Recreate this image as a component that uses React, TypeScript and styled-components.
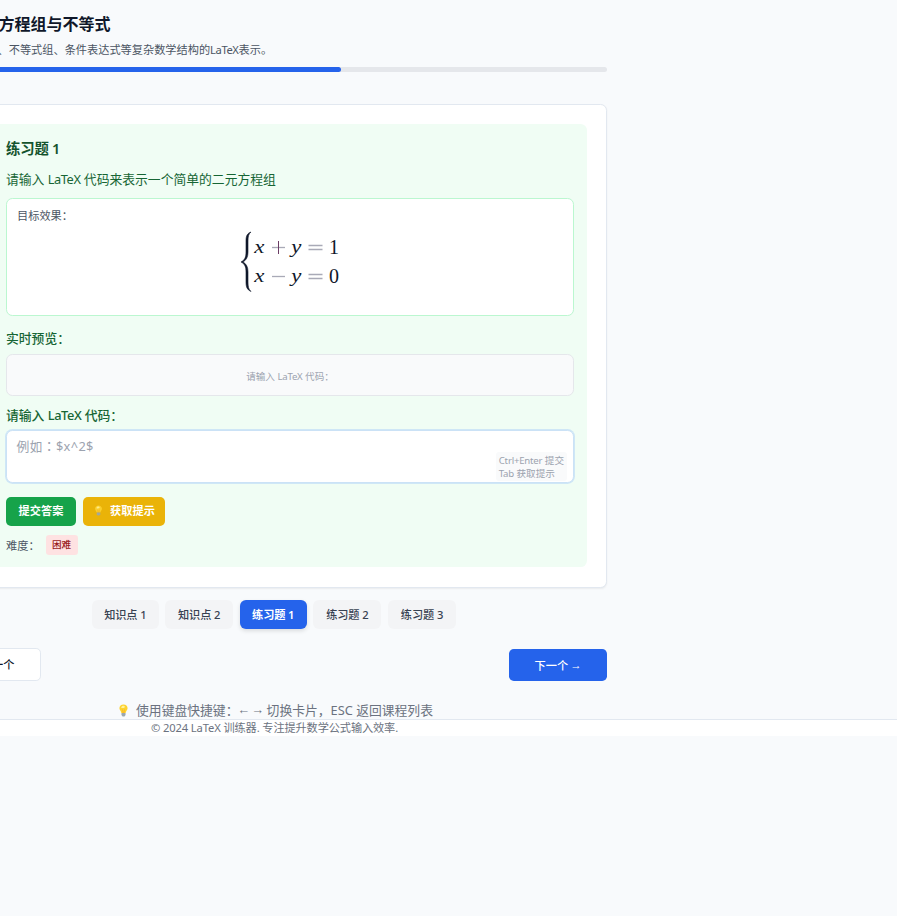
import React from "react";
import styled, { createGlobalStyle, css } from "styled-components";

const GlobalStyle = createGlobalStyle`
  * { box-sizing: border-box; }
  body {
    margin: 0;
    overflow: hidden;
    background: #f8fafc;
    color: #0f172a;
    font-family: "Noto Sans", "Noto Sans CJK SC", sans-serif;
  }
  h1, h3, p { margin: 0; }
  button, textarea { font-family: inherit; }
`;

const Page = styled.div`
  min-height: 916px;
  overflow: hidden;
  white-space: nowrap;
`;

const Column = styled.main`
  width: 664px;
  height: 719px;
  margin-left: -57px;
  padding-top: 13px;
`;

const Title = styled.h1`
  padding-left: 55.5px;
  font-size: 16px;
  line-height: 22px;
  font-weight: 700;
`;

const Subtitle = styled.p`
  margin-top: 6px;
  padding-left: 54.5px;
  font-size: 11.2px;
  line-height: 18px;
  color: #4b5563;
`;

const Latin = styled.span`
  letter-spacing: -0.4px;
`;

const Progress = styled.div`
  height: 5px;
  margin-top: 8px;
  border-radius: 5px;
  background: #e5e7eb;
  overflow: hidden;
`;

const ProgressFill = styled.div`
  height: 100%;
  border-radius: 5px;
  background: #2563eb;
`;

const Card = styled.section`
  height: 484px;
  margin-top: 32px;
  padding: 19px;
  border: 1px solid #e2e8f0;
  border-radius: 6.4px;
  background: #fff;
  box-shadow: 0 1px 2px rgba(0, 0, 0, 0.06);
`;

const Exercise = styled.div`
  height: 443px;
  padding: 14px 13px 0 43px;
  border-radius: 6.4px;
  background: #f0fdf4;
`;

const ExerciseTitle = styled.h3`
  font-size: 14.4px;
  line-height: 22px;
  font-weight: 600;
  letter-spacing: -0.2px;
  color: #14532d;
`;

const Question = styled.p`
  margin-top: 9px;
  font-size: 12.8px;
  line-height: 20px;
  color: #166534;
`;

const Target = styled.div`
  height: 118px;
  margin-top: 9px;
  padding: 8px 10px;
  border: 1px solid #bbf7d0;
  border-radius: 6.4px;
  background: #fff;
`;

const TargetLabel = styled.div`
  font-size: 11.2px;
  line-height: 18px;
  color: #4b5563;
`;

const Equation = styled.div`
  display: flex;
  justify-content: center;
  margin-top: 6px;
`;

const Brace = styled.svg`
  width: 13px;
  height: 62px;
`;

const Rows = styled.div`
  display: grid;
  grid-template-columns: 14px 23px 14px 23px 13px;
  grid-auto-rows: 29px;
  margin-top: 2px;
  font-family: "Liberation Serif", serif;
  font-size: 20px;
  line-height: 28px;
`;

const Variable = styled.span`
  padding-left: 1px;
  font-size: 19px;
  font-style: italic;
  transform: scaleX(1.2);
  transform-origin: left;
`;

const Operator = styled.span`
  display: flex;
  align-items: center;
  justify-content: center;
  svg { display: block; }
`;

const Digit = styled.span`
  padding-left: 1px;
  text-align: center;
`;

const Label = styled.div<{ $gap: number }>`
  margin-top: ${(p) => p.$gap}px;
  font-size: 12.8px;
  line-height: 20px;
  font-weight: 500;
  color: #166534;
`;

const Preview = styled.div`
  height: 42px;
  margin-top: 6px;
  padding-top: 3px;
  border: 1px solid #e5e7eb;
  border-radius: 6.4px;
  background: #f9fafb;
  font-size: 9.6px;
  line-height: 38px;
  text-align: center;
  color: #9ca3af;
`;

const Field = styled.div`
  position: relative;
  height: 54px;
  margin-top: 5px;
`;

const Input = styled.textarea`
  display: block;
  width: 100%;
  height: 53px;
  padding: 5px 9.5px;
  border: 1px solid #cbe2f6;
  border-radius: 6.4px;
  outline: none;
  resize: none;
  background: #fff;
  box-shadow: 0 0 0 1px #cfe7f6;
  font-family: "Noto Sans", "Noto Sans CJK TC", sans-serif;
  font-size: 12.8px;
  line-height: 20px;
  letter-spacing: 0.35px;
  &::placeholder {
    color: #9ca3af;
  }
`;

const Keys = styled.div`
  position: absolute;
  right: 7px;
  bottom: 3px;
  padding: 2px 3px 1px;
  border-radius: 3px;
  background: #f9fafb;
  font-size: 9.6px;
  line-height: 13px;
  color: #9ca3af;
`;

const KeyName = styled.span`
  letter-spacing: -0.2px;
`;

const Actions = styled.div`
  display: flex;
  gap: 7px;
  margin-top: 13px;
`;

const Action = styled.button<{ $color: string; $width: number }>`
  display: flex;
  align-items: center;
  justify-content: center;
  gap: 6px;
  width: ${(p) => p.$width}px;
  height: 29px;
  padding: 0 0 3px;
  border: 0;
  border-radius: 5px;
  background: ${(p) => p.$color};
  color: #fff;
  font-size: 11.2px;
  font-weight: 600;
`;

const Difficulty = styled.div`
  display: flex;
  align-items: center;
  gap: 6px;
  height: 20px;
  margin-top: 9px;
  font-size: 11.2px;
  color: #4b5563;
`;

const Badge = styled.span`
  padding: 0 6.4px;
  border-radius: 3.2px;
  background: #fee2e2;
  color: #991b1b;
  font-size: 9.6px;
  line-height: 20px;
  font-weight: 500;
`;

const Tabs = styled.nav`
  display: flex;
  justify-content: center;
  gap: 6.8px;
  margin-top: 12px;
  padding-right: 2px;
`;

const Tab = styled.button<{ $active: boolean; $width: number }>`
  width: ${(p) => p.$width}px;
  height: 29px;
  padding: 0 0 1px;
  border: 0;
  border-radius: 6px;
  background: #f3f4f6;
  color: #374151;
  font-size: 11.2px;
  font-weight: 500;
  letter-spacing: -0.1px;
  ${(p) =>
    p.$active &&
    css`
      background: #2563eb;
      color: #fff;
      font-weight: 600;
      box-shadow: 0 2px 4px rgba(0, 0, 0, 0.12);
    `}
`;

const Pager = styled.div`
  display: flex;
  justify-content: space-between;
  align-items: flex-end;
  height: 33px;
  margin-top: 19px;
`;

const PagerButton = styled.button<{ $primary?: boolean }>`
  width: 98px;
  height: ${(p) => (p.$primary ? 32 : 33)}px;
  padding: 0 1px 1px 0;
  border: ${(p) => (p.$primary ? "0" : "1px solid #e2e8f0")};
  border-radius: 4.8px;
  background: ${(p) => (p.$primary ? "#2563eb" : "#fff")};
  color: ${(p) => (p.$primary ? "#fff" : "#0f172a")};
  font-size: 11.2px;
  font-weight: 500;
`;

const Arrow = styled.span`
  position: relative;
  top: -1px;
  margin: 0 -0.08em;
  font-family: "Liberation Sans", sans-serif;
`;

const Shortcuts = styled.p`
  display: flex;
  align-items: center;
  justify-content: center;
  gap: 6px;
  margin-top: 19px;
  font-size: 12.8px;
  line-height: 20px;
  color: #6b7280;
`;

const Footer = styled.footer`
  height: 17px;
  border-top: 1px solid #e2e8f0;
  background: #fff;
`;

const Copyright = styled.p`
  width: 664px;
  margin-left: -57.5px;
  text-align: center;
  font-size: 11.2px;
  line-height: 16px;
  letter-spacing: -0.12px;
  color: #6b7280;
`;

function Bulb({ size, faded }: { size: number; faded?: boolean }) {
  return (
    <svg width={size} height={size} viewBox="0 0 14 14" opacity={faded ? 0.9 : 1}>
      <path
        d="M7 .6C4.400.6 2.600 2.400 2.600 4.700c0 2.100 1.900 3 2.100 5h4.600c.2-2 2.100-2.900 2.100-5C11.400 2.400 9.600.6 7 .6z"
        fill="#fdd22f"
      />
      <path d="M5.300 2.300c1.200-.8 3-.4 3.300.8-.9 1.300-3 1.700-4.100 1 0-.7.3-1.400.8-1.800z" fill="#fff19a" />
      <path d="M5.900 5.800L6.500 9.700h1L8.100 5.800" fill="none" stroke="#f5a623" strokeWidth=".6" />
      <path d="M4.800 9.700h4.400v2.200L8 13.500H6l-1.200-1.600z" fill="#9aa7b0" />
    </svg>
  );
}

function Sign({ kind }: { kind: "plus" | "minus" | "equal" }) {
  return (
    <svg width="15" height="15" viewBox="0 0 15 15">
      {kind === "equal" ? (
        <path d="M.5 5.500h14M.5 9.500h14" stroke="#a9aab7" strokeWidth="1.300" />
      ) : (
        <path d="M1 7.500h13" stroke="#a9aab7" strokeWidth="1.300" />
      )}
      {kind === "plus" && <path d="M7.500 1v13" stroke="#6b3d65" strokeWidth="1" />}
    </svg>
  );
}

const equations: { sign: "plus" | "minus"; value: number }[] = [
  { sign: "plus", value: 1 },
  { sign: "minus", value: 0 },
];

const tabs = [
  { name: "知识点 1", width: 66.5 },
  { name: "知识点 2", width: 67.7 },
  { name: "练习题 1", width: 66.8 },
  { name: "练习题 2", width: 67.9 },
  { name: "练习题 3", width: 67.8 },
];

export default function App() {
  const current = 2;
  return (
    <Page>
      <GlobalStyle />
      <Column>
        <Title>方程组与不等式</Title>
        <Subtitle>
          、不等式组、条件表达式等复杂数学结构的<Latin>LaTeX</Latin>表示。
        </Subtitle>
        <Progress>
          <ProgressFill style={{ width: `${((current + 1) / tabs.length) * 100}%` }} />
        </Progress>
        <Card>
          <Exercise>
            <ExerciseTitle>练习题 1</ExerciseTitle>
            <Question>
              请输入 <Latin>LaTeX</Latin> 代码来表示一个简单的二元方程组
            </Question>
            <Target>
              <TargetLabel>目标效果：</TargetLabel>
              <Equation>
                <Brace viewBox="0 0 13 62">
                  <path
                    d="M11 1C7 2.500 6 5 6 10v11c0 5-1 8-5 10 4 2 5 5 5 10v10c0 5 1 7.500 5 9.500-2.500-2-3-5-3-9.500V41c0-5-1.500-8-5-10 3.500-2 5-5 5-10V10c0-4.500.5-7 3-9z"
                    fill="#0f172a"
                    stroke="#0f172a"
                    strokeWidth=".6"
                  />
                </Brace>
                <Rows>
                  {equations.map((e) => (
                    <React.Fragment key={e.sign}>
                      <Variable>x</Variable>
                      <Operator><Sign kind={e.sign} /></Operator>
                      <Variable>y</Variable>
                      <Operator><Sign kind="equal" /></Operator>
                      <Digit>{e.value}</Digit>
                    </React.Fragment>
                  ))}
                </Rows>
              </Equation>
            </Target>
            <Label $gap={12}>实时预览：</Label>
            <Preview>
              请输入 <KeyName>LaTeX</KeyName> 代码：
            </Preview>
            <Label $gap={9}>
              请输入 <Latin>LaTeX</Latin> 代码：
            </Label>
            <Field>
              <Input placeholder="例如：$x^2$" />
              <Keys>
                <KeyName>Ctrl+Enter</KeyName> 提交
                <br />
                <KeyName>Tab</KeyName> 获取提示
              </Keys>
            </Field>
            <Actions>
              <Action $color="#16a34a" $width={70}>提交答案</Action>
              <Action $color="#eab308" $width={82}>
                <Bulb size={11} faded />
                获取提示
              </Action>
            </Actions>
            <Difficulty>
              难度：<Badge>困难</Badge>
            </Difficulty>
          </Exercise>
        </Card>
        <Tabs>
          {tabs.map((t, i) => (
            <Tab key={t.name} $active={i === current} $width={t.width}>
              {t.name}
            </Tab>
          ))}
        </Tabs>
        <Pager>
          <PagerButton><Arrow>←</Arrow> 上一个</PagerButton>
          <PagerButton $primary>下一个 <Arrow>→</Arrow></PagerButton>
        </Pager>
        <Shortcuts>
          <Bulb size={13} />
          <span>
            使用键盘快捷键：<Arrow>←</Arrow> <Arrow>→</Arrow> 切换卡片，ESC 返回课程列表
          </span>
        </Shortcuts>
      </Column>
      <Footer>
        <Copyright>© 2024 LaTeX 训练器. 专注提升数学公式输入效率.</Copyright>
      </Footer>
    </Page>
  );
}
